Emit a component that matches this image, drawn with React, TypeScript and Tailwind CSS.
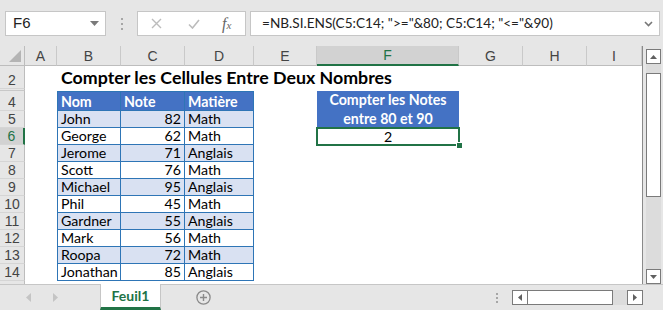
import { Fragment } from "react";

const cols = [
  { id: "A", w: 32 },
  { id: "B", w: 64 },
  { id: "C", w: 64 },
  { id: "D", w: 69 },
  { id: "E", w: 63 },
  { id: "F", w: 142 },
  { id: "G", w: 64 },
  { id: "H", w: 64 },
  { id: "I", w: 55 },
];

const notes: [string, number, string][] = [
  ["John", 82, "Math"],
  ["George", 62, "Math"],
  ["Jerome", 71, "Anglais"],
  ["Scott", 76, "Math"],
  ["Michael", 95, "Anglais"],
  ["Phil", 45, "Math"],
  ["Gardner", 55, "Anglais"],
  ["Mark", 56, "Math"],
  ["Roopa", 72, "Math"],
  ["Jonathan", 85, "Anglais"],
];

const cellFont = "font-['Lato','Liberation_Sans',sans-serif] text-[14.2px] text-black";

const RowHead = ({ n, active }: { n: string; active?: boolean }) => (
  <div
    className={`flex items-end justify-center pb-px border-b border-[#d5d5d5] font-['Liberation_Sans',sans-serif] text-[14px] leading-none ${
      active
        ? "bg-[#d2d2d2] text-[#217346] border-r-2 border-r-[#217346]"
        : "bg-[#e6e6e6] text-[#444] border-r border-r-[#bdbdbd]"
    }`}
  >
    {n}
  </div>
);

const Sheet = () => (
  <div className="grid grid-cols-[25px_32px_64px_64px_69px_63px_142px_64px_64px_55px] grid-rows-[20px_23px_2px_20px_repeat(10,17px)_3px] bg-white border-r border-[#8a8a8a] w-[643px]">
    {/* column headers */}
    <div className="bg-[#e6e6e6] border-r border-b border-[#bdbdbd] relative">
      <svg className="absolute right-[3px] bottom-[3px]" width="12" height="12" viewBox="0 0 12 12">
        <polygon points="12,0 12,12 0,12" fill="#b4b4b4" />
      </svg>
    </div>
    {cols.map((c) => (
      <div
        key={c.id}
        className={`flex items-end justify-center pb-[2px] font-['Liberation_Sans',sans-serif] text-[14px] leading-none border-r border-[#c9c9c9] ${
          c.id === "F"
            ? "bg-[#d2d2d2] text-[#217346] border-b-2 border-b-[#217346]"
            : "bg-[#e6e6e6] text-[#444] border-b border-b-[#bdbdbd]"
        }`}
      >
        {c.id}
      </div>
    ))}

    {/* row 2 */}
    <RowHead n="2" />
    <div />
    <div className="relative z-10 whitespace-nowrap flex items-end pl-[4px] font-['Lato','Liberation_Sans',sans-serif] font-bold text-[17.8px] text-black leading-none pb-[2px]">
      Compter les Cellules Entre Deux Nombres
    </div>
    <div className="col-span-7" />

    {/* row 3 hidden */}
    <div className="bg-[#e6e6e6] border-r border-r-[#bdbdbd] border-b border-b-[#c8c8c8]" />
    <div className="col-span-9" />

    {/* row 4 */}
    <RowHead n="4" />
    <div />
    {["Nom", "Note", "Matière"].map((h, i) => (
      <div
        key={h}
        className={`bg-[#4472c4] border-[#2e75b6] border-t border-r border-b ${
          i === 0 ? "border-l" : ""
        } flex items-end pl-[3px] pb-px font-['Lato','Liberation_Sans',sans-serif] font-bold text-[14.2px] text-white leading-none`}
      >
        {h}
      </div>
    ))}
    <div />
    <div className="row-span-2 bg-[#4472c4] flex flex-col items-center justify-center font-['Lato','Liberation_Sans',sans-serif] font-bold text-[14.2px] text-white leading-[19px] pb-px">
      <span>Compter les Notes</span>
      <span>entre 80 et 90</span>
    </div>
    <div className="col-span-3" />

    {notes.map(([name, note, subj], i) => {
      const r = i + 5;
      const band = i % 2 === 0 ? "bg-[#d9e1f2]" : "bg-white";
      return (
        <Fragment key={name}>
          <RowHead n={String(r)} active={r === 6} />
          <div />
          <div className={`${band} border-l border-r border-b border-[#2e75b6] flex items-end pl-[3px] ${cellFont} leading-none pb-px`}>
            {name}
          </div>
          <div className={`${band} border-r border-b border-[#2e75b6] flex items-end justify-end pr-[3px] ${cellFont} leading-none pb-px`}>
            {note}
          </div>
          <div className={`${band} border-r border-b border-[#2e75b6] flex items-end pl-[3px] ${cellFont} leading-none pb-px`}>
            {subj}
          </div>
          <div />
          {r === 5 ? null : r === 6 ? (
            <div className={`relative flex items-end justify-center ${cellFont} leading-none pb-px`}>
              <div className="absolute -top-px -left-px -right-px -bottom-px border-2 border-[#217346]" />
              <div className="absolute -right-[4px] -bottom-[4px] w-[7px] h-[7px] bg-[#217346] border border-white" />
              2
            </div>
          ) : (
            <div />
          )}
          <div className="col-span-3" />
        </Fragment>
      );
    })}

    <div className="bg-[#e6e6e6] border-r border-[#bdbdbd]" />
    <div className="col-span-9" />
  </div>
);

const VScroll = () => (
  <div className="w-[20px] bg-[#e6e6e6] flex flex-col pt-[3px] pl-[3px]">
    <div className="w-[15px] h-[15px] bg-white border border-[#7a7a7a] flex items-center justify-center">
      <svg width="7" height="4" viewBox="0 0 7 4">
        <polygon points="0,4 3.5,0 7,4" fill="#606060" />
      </svg>
    </div>
    <div className="w-[15px] flex-1 bg-[#dcdcdc] pt-[9px] flex flex-col">
      <div className="h-[124px] bg-white border border-[#7a7a7a]" />
    </div>
    <div className="w-[15px] h-[15px] bg-white border border-[#7a7a7a] flex items-center justify-center">
      <svg width="7" height="4" viewBox="0 0 7 4">
        <polygon points="0,0 3.5,4 7,0" fill="#606060" />
      </svg>
    </div>
  </div>
);

const FormulaBar = () => (
  <div className="h-[46px] bg-[#e6e6e6] flex items-start pt-[11px] pl-[5px] gap-0">
    <div className="w-[101px] h-[25px] bg-white border border-[#c6c6c6] flex items-center justify-between pl-[7px] pr-[6px] font-['Liberation_Sans',sans-serif] text-[15px] text-[#222]">
      <span>F6</span>
      <svg width="9" height="5" viewBox="0 0 9 5">
        <polygon points="0,0 9,0 4.5,5" fill="#7a7a7a" />
      </svg>
    </div>
    <div className="w-[31px] h-[25px] flex flex-col items-center justify-center gap-[3px]">
      <span className="w-[2px] h-[2px] bg-[#a6a6a6]" />
      <span className="w-[2px] h-[2px] bg-[#a6a6a6]" />
      <span className="w-[2px] h-[2px] bg-[#a6a6a6]" />
    </div>
    <div className="w-[109px] h-[25px] bg-white border border-[#c6c6c6] flex items-center">
      <svg className="ml-[13px]" width="11" height="11" viewBox="0 0 11 11">
        <path d="M1 1 L10 10 M10 1 L1 10" stroke="#bcbcbc" strokeWidth="1.4" />
      </svg>
      <svg className="ml-[26px]" width="12" height="10" viewBox="0 0 12 10">
        <path d="M1 5.5 L4.5 9 L11 1" stroke="#bcbcbc" strokeWidth="1.6" fill="none" />
      </svg>
      <span className="ml-[22px] font-['Liberation_Serif',serif] italic text-[16px] text-[#666] leading-none">
        f<span className="text-[11px] font-['Liberation_Serif',serif] italic">x</span>
      </span>
    </div>
    <div className="ml-[4px] w-[410px] h-[25px] bg-white border border-[#c6c6c6] flex items-center justify-between pl-[11px] pr-[6px] font-['Lato','Liberation_Sans',sans-serif] text-[13.6px] text-[#222] whitespace-nowrap">
      <span>=NB.SI.ENS(C5:C14; "&gt;="&amp;80; C5:C14; "&lt;="&amp;90)</span>
      <svg width="9" height="6" viewBox="0 0 9 6">
        <path d="M1 1 L4.5 4.5 L8 1" stroke="#777" strokeWidth="1.6" fill="none" />
      </svg>
    </div>
  </div>
);

const TabBar = () => (
  <div className="h-[26px] bg-[#e6e6e6] flex items-stretch border-t border-[#c6c6c6]">
    <div className="w-[100px] flex items-center pl-[26px] gap-[22px]">
      <svg width="5" height="9" viewBox="0 0 5 9">
        <polygon points="5,0 0,4.5 5,9" fill="#c4c4c4" />
      </svg>
      <svg width="5" height="9" viewBox="0 0 5 9">
        <polygon points="0,0 5,4.5 0,9" fill="#c4c4c4" />
      </svg>
    </div>
    <div className="w-[61px] bg-white border-x border-[#c6c6c6] border-b-[3px] border-b-[#217346] -mt-px flex items-center justify-center font-['Lato','Liberation_Sans',sans-serif] font-bold text-[14px] text-[#217346]">
      Feuil1
    </div>
    <div className="w-[84px] flex items-center justify-center">
      <svg width="15" height="15" viewBox="0 0 15 15">
        <circle cx="7.5" cy="7.5" r="6.6" stroke="#8a8a8a" strokeWidth="1.3" fill="none" />
        <path d="M7.5 4 V11 M4 7.5 H11" stroke="#8a8a8a" strokeWidth="1.4" />
      </svg>
    </div>
    <div className="flex-1 flex items-center justify-end pr-[20px]">
      <div className="flex flex-col gap-[2px] mr-[14px]">
        <span className="w-[2px] h-[2px] bg-[#a6a6a6]" />
        <span className="w-[2px] h-[2px] bg-[#a6a6a6]" />
        <span className="w-[2px] h-[2px] bg-[#a6a6a6]" />
      </div>
      <div className="flex h-[15px]">
        <div className="w-[16px] bg-white border border-[#7a7a7a] flex items-center justify-center">
          <svg width="4" height="7" viewBox="0 0 4 7">
            <polygon points="4,0 0,3.5 4,7" fill="#606060" />
          </svg>
        </div>
        <div className="w-[85px] bg-white border-y border-r border-[#7a7a7a]" />
        <div className="w-[14px] bg-[#dcdcdc]" />
        <div className="w-[16px] bg-white border border-[#7a7a7a] flex items-center justify-center">
          <svg width="4" height="7" viewBox="0 0 4 7">
            <polygon points="0,0 4,3.5 0,7" fill="#606060" />
          </svg>
        </div>
      </div>
    </div>
  </div>
);

export default function App() {
  return (
    <div className="w-[663px] h-[310px] overflow-hidden bg-[#e6e6e6] flex flex-col">
      <FormulaBar />
      <div className="flex h-[238px]">
        <Sheet />
        <VScroll />
      </div>
      <TabBar />
    </div>
  );
}
